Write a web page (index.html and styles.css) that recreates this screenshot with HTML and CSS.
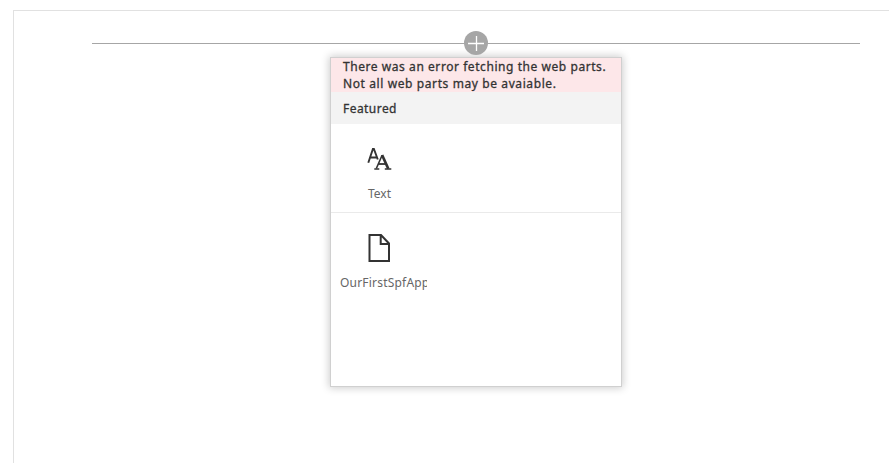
FILE: index.html
```html
<!DOCTYPE html>
<html lang="en">
<head>
<meta charset="utf-8">
<title>Add a web part</title>
<link rel="stylesheet" href="styles.css">
</head>
<body>
<main class="canvas">
  <div class="divider">
    <button class="add" aria-label="Add a web part">
      <svg width="24" height="24" viewBox="0 0 24 24"><path d="M4 12.5H20M12.5 5V20" stroke="#fff" stroke-width="1.3"/></svg>
    </button>
  </div>
  <section class="toolbox">
    <div class="error"><span class="line first">There was an error fetching the web parts.</span><span class="line second">Not all web parts may be avaiable.</span></div>
    <h2 class="heading">Featured</h2>
    <div class="group">
      <div class="tile">
        <svg class="icon" width="26" height="28" viewBox="0 0 26 28" fill="none" stroke="#333"><path d="M1.3 17.8L5.9 4H6.9L10.8 14.5M3.1 12.5H9.6" stroke-width="1.9"/><path d="M9.3 23.5L15.1 10.2" stroke-width="1.6"/><path d="M15.1 10L21.3 23.7" stroke-width="2.7"/><path d="M11.3 19H18.7" stroke-width="1.8"/><path d="M7.3 24H12.3M17.8 24H24.3" stroke-width="1.3"/></svg>
        <span class="label text">Text</span>
      </div>
    </div>
    <div class="group">
      <div class="tile">
        <svg class="icon" width="26" height="28" viewBox="0 0 26 28" fill="none" stroke="#333" stroke-width="2"><path d="M2.5 1H14L22 9.5V27H2.5ZM13.7 1V10H22"/></svg>
        <span class="label app">OurFirstSpfApp</span>
      </div>
    </div>
  </section>
</main>
</body>
</html>
```
FILE: styles.css
```css
* { box-sizing: border-box; }
body {
  margin: 0;
  padding: 10px 0 0 13px;
  height: 463px;
  overflow: hidden;
  background: #fff;
  font-family: "Noto Sans", "Open Sans", sans-serif;
  color: #333;
}
.canvas {
  height: 453px;
  border: solid #e1e1e1;
  border-width: 1px 0 0 1px;
  padding: 20px 29px 0 78px;
}
.divider {
  height: 24px;
  display: flex;
  justify-content: center;
  background: linear-gradient(#a6a6a6, #a6a6a6) 0 12px / 100% 1px no-repeat;
}
.add {
  width: 24px;
  height: 24px;
  padding: 0;
  border: 0;
  border-radius: 50%;
  background: #a6a6a6;
}
.add svg { display: block; }
.toolbox {
  width: 292px;
  height: 330px;
  margin: 2px 0 0 238px;
  border: 1px solid #d0d0d0;
  background: #fff;
  box-shadow: 0 0 8px 1px rgba(0, 0, 0, .2);
}
.error {
  height: 34px;
  padding-left: 12px;
  background: #fde7e9;
}
.line, .heading {
  display: block;
  font-size: 12px;
  font-weight: 400;
  -webkit-text-stroke: .3px #333;
  line-height: 17px;
  white-space: nowrap;
}
.first { letter-spacing: .56px; }
.second { letter-spacing: .6px; }
.heading {
  height: 32px;
  margin: 0;
  padding-left: 12px;
  line-height: 33px;
  letter-spacing: .45px;
  background: #f3f3f3;
}
.group { height: 88px; padding: 21px 9px 0; }
.group + .group { border-top: 1px solid #eaeaea; }
.tile {
  width: 88px;
  display: flex;
  flex-direction: column;
  align-items: center;
}
.tile .icon { position: relative; left: -4px; }
.label {
  width: 88px;
  margin-top: 12px;
  overflow: hidden;
  font-size: 12px;
  line-height: 18px;
  white-space: nowrap;
  color: #666;
}
.text { padding-left: 28px; }
.app {
  width: 87px;
  margin-right: 1px;
  letter-spacing: .2px;
}
```
